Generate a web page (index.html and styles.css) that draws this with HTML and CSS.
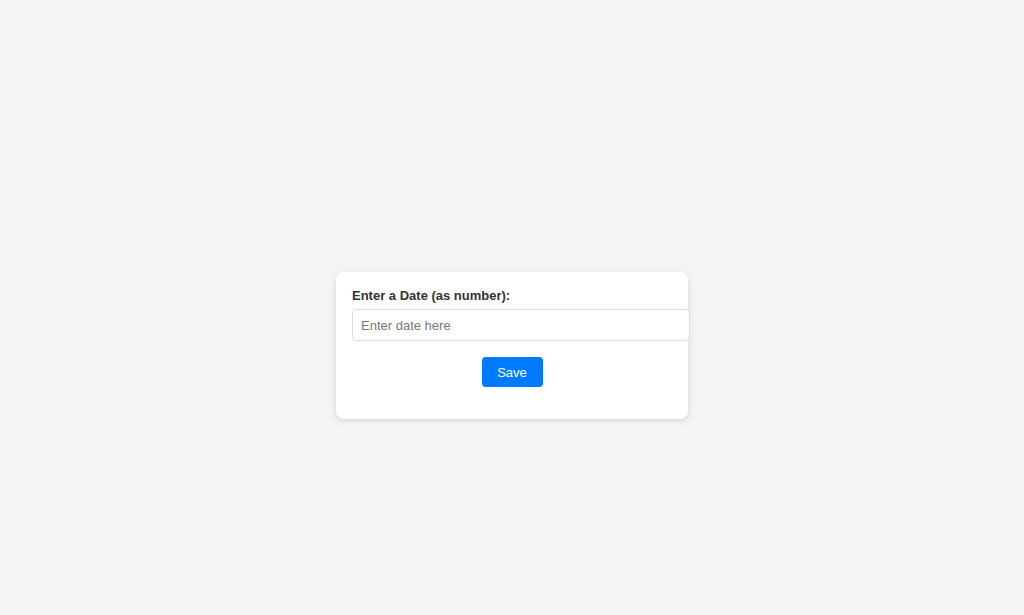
FILE: index.html
```html
<!DOCTYPE html>
<html lang="en">
<head>
<meta charset="utf-8">
<title>Date Entry</title>
<link rel="stylesheet" href="styles.css">
</head>
<body>
<div class="page">
  <form class="card" onsubmit="return false;">
    <label class="label" for="date">Enter a Date (as number):</label>
    <input class="input" id="date" type="text" placeholder="Enter date here">
    <div class="actions">
      <button class="btn" type="submit">Save</button>
    </div>
  </form>
</div>
</body>
</html>
```

FILE: styles.css
```css
html, body {
  margin: 0;
  padding: 0;
}
body {
  background: #f4f4f4;
  font-family: "Liberation Sans", Arial, sans-serif;
  color: #333;
}
.page {
  min-height: 615px;
  box-sizing: border-box;
  padding-top: 272px;
  display: flex;
  flex-direction: column;
  align-items: center;
}
.card {
  width: 352px;
  box-sizing: border-box;
  padding: 16px 16px 32px;
  background: #fff;
  border-radius: 8px;
  box-shadow: 0 2px 6px rgba(0, 0, 0, 0.12);
  display: flex;
  flex-direction: column;
  align-items: flex-start;
}
.label {
  display: block;
  font-size: 13px;
  line-height: 15px;
  font-weight: bold;
  color: #333;
  margin-bottom: 6px;
}
.input {
  width: 338px;
  box-sizing: border-box;
  height: 32px;
  padding: 7px 8px;
  font-family: "Liberation Sans", Arial, sans-serif;
  font-size: 13px;
  color: #333;
  border: 1px solid #ddd;
  border-radius: 4px;
  background: #fff;
  outline: none;
  margin: 0;
}
.input::placeholder {
  color: #777;
}
.actions {
  width: 100%;
  display: flex;
  justify-content: center;
  margin-top: 16px;
}
.btn {
  width: 61px;
  height: 30px;
  padding: 0;
  background: #007bff;
  color: #fff;
  border: none;
  border-radius: 4px;
  font-family: "Liberation Sans", Arial, sans-serif;
  font-size: 13px;
  cursor: pointer;
}
```
